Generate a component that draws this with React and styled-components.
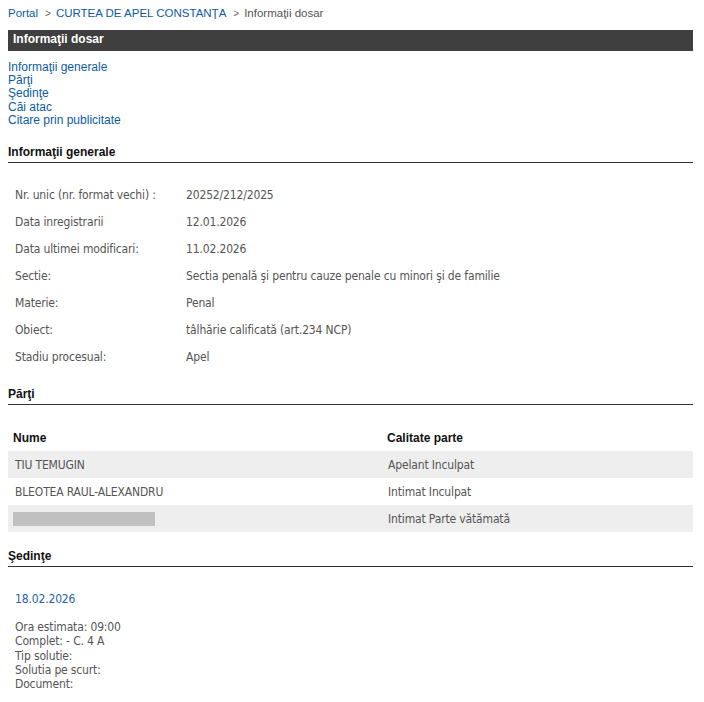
import styled, { createGlobalStyle } from "styled-components";

const GlobalStyle = createGlobalStyle`
    body {
        margin: 0;
        background: #fff;
        font-family: "Liberation Sans", Arial, sans-serif;
    }
`;

const Page = styled.div`
    width: 685px;
    padding: 6px 0 0 8px;
`;

const Crumbs = styled.div`
    font-size: 11.5px;
    line-height: 14px;
    color: #555;
    display: flex;
    align-items: baseline;
`;

const CrumbLink = styled.a`
    color: #0e5ba3;
    text-decoration: none;
`;

const Sep = styled.span`
    font-size: 10px;
    color: #666;
    margin: 0 5px 0 7px;
`;

const Bar = styled.div`
    margin-top: 9px;
    background: #3f3f3f;
    color: #fff;
    font-weight: bold;
    font-size: 12px;
    line-height: 16px;
    padding: 1px 5px 4px;
`;

const Nav = styled.div`
    margin-top: 10px;
    display: flex;
    flex-direction: column;
    font-size: 12px;
    line-height: 13.2px;
`;

const NavLink = styled.a`
    color: #0e5ba3;
    text-decoration: none;
`;

const Heading = styled.div`
    margin-top: ${(p) => p.top}px;
    font-weight: bold;
    font-size: 12px;
    line-height: 14px;
    color: #111;
    padding-bottom: 3px;
    border-bottom: 1px solid #333;
`;

const InfoGrid = styled.div`
    margin-top: 18px;
    padding-left: 7px;
    display: grid;
    grid-template-columns: 171px 1fr;
    grid-auto-rows: 27px;
    align-items: center;
    font-family: "DejaVu Sans Condensed", "DejaVu Sans", Tahoma, sans-serif;
    font-size: 12px;
    letter-spacing: -0.15px;
    color: #555;
`;

const Table = styled.table`
    margin-top: 19px;
    width: 100%;
    border-collapse: collapse;
`;

const Th = styled.th`
    text-align: left;
    height: 27px;
    padding: 0 0 0 5px;
    font-size: 12px;
    font-weight: bold;
    color: #111;
    width: ${(p) => p.w || "auto"};
`;

const Tr = styled.tr`
    background: ${(p) => (p.shade ? "#eeeeee" : "#fff")};
`;

const Td = styled.td`
    height: 27px;
    padding: 0 0 0 ${(p) => p.pl || 7}px;
    font-family: "DejaVu Sans Condensed", "DejaVu Sans", Tahoma, sans-serif;
    font-size: 12px;
    letter-spacing: -0.15px;
    color: #555;
`;

const Hidden = styled.div`
    width: 142px;
    height: 14px;
    margin-left: -2px;
    background: #c0c0c0;
`;

const Session = styled.div`
    margin-top: 25px;
    padding-left: 7px;
    font-family: "DejaVu Sans Condensed", "DejaVu Sans", Tahoma, sans-serif;
    font-size: 12px;
    letter-spacing: -0.15px;
`;

const SessionDate = styled.a`
    display: block;
    color: #1f64a8;
    line-height: 14px;
    text-decoration: none;
    margin-bottom: 14px;
`;

const SessionLines = styled.div`
    color: #555;
    line-height: 14.3px;
`;

const info = [
    ["Nr. unic (nr. format vechi) :", "20252/212/2025"],
    ["Data inregistrarii", "12.01.2026"],
    ["Data ultimei modificari:", "11.02.2026"],
    ["Sectie:", "Sectia penală şi pentru cauze penale cu minori şi de familie"],
    ["Materie:", "Penal"],
    ["Obiect:", "tâlhărie calificată (art.234 NCP)"],
    ["Stadiu procesual:", "Apel"],
];

const parti = [
    ["TIU TEMUGIN", "Apelant Inculpat"],
    ["BLEOTEA RAUL-ALEXANDRU", "Intimat Inculpat"],
    [null, "Intimat Parte vătămată"],
];

export default function App() {
    return (
        <Page>
            <GlobalStyle />
            <Crumbs>
                <CrumbLink>Portal</CrumbLink>
                <Sep>&gt;</Sep>
                <CrumbLink>CURTEA DE APEL CONSTANŢA</CrumbLink>
                <Sep>&gt;</Sep>
                <span>Informaţii dosar</span>
            </Crumbs>
            <Bar>Informaţii dosar</Bar>
            <Nav>
                <NavLink>Informaţii generale</NavLink>
                <NavLink>Părţi</NavLink>
                <NavLink>Şedinţe</NavLink>
                <NavLink>Căi atac</NavLink>
                <NavLink>Citare prin publicitate</NavLink>
            </Nav>

            <Heading top={18}>Informaţii generale</Heading>
            <InfoGrid>
                {info.map(([k, v]) => [
                    <div key={k}>{k}</div>,
                    <div key={k + "v"}>{v}</div>,
                ])}
            </InfoGrid>

            <Heading top={17}>Părţi</Heading>
            <Table>
                <thead>
                    <tr>
                        <Th w="369px">Nume</Th>
                        <Th>Calitate parte</Th>
                    </tr>
                </thead>
                <tbody>
                    {parti.map(([name, role], i) => (
                        <Tr key={i} shade={i % 2 === 0}>
                            <Td>{name ? name : <Hidden />}</Td>
                            <Td pl={6}>{role}</Td>
                        </Tr>
                    ))}
                </tbody>
            </Table>

            <Heading top={17}>Şedinţe</Heading>
            <Session>
                <SessionDate>18.02.2026</SessionDate>
                <SessionLines>
                    <div>Ora estimata: 09:00</div>
                    <div>Complet: - C. 4 A</div>
                    <div>Tip solutie:</div>
                    <div>Solutia pe scurt:</div>
                    <div>Document:</div>
                </SessionLines>
            </Session>
        </Page>
    );
}
